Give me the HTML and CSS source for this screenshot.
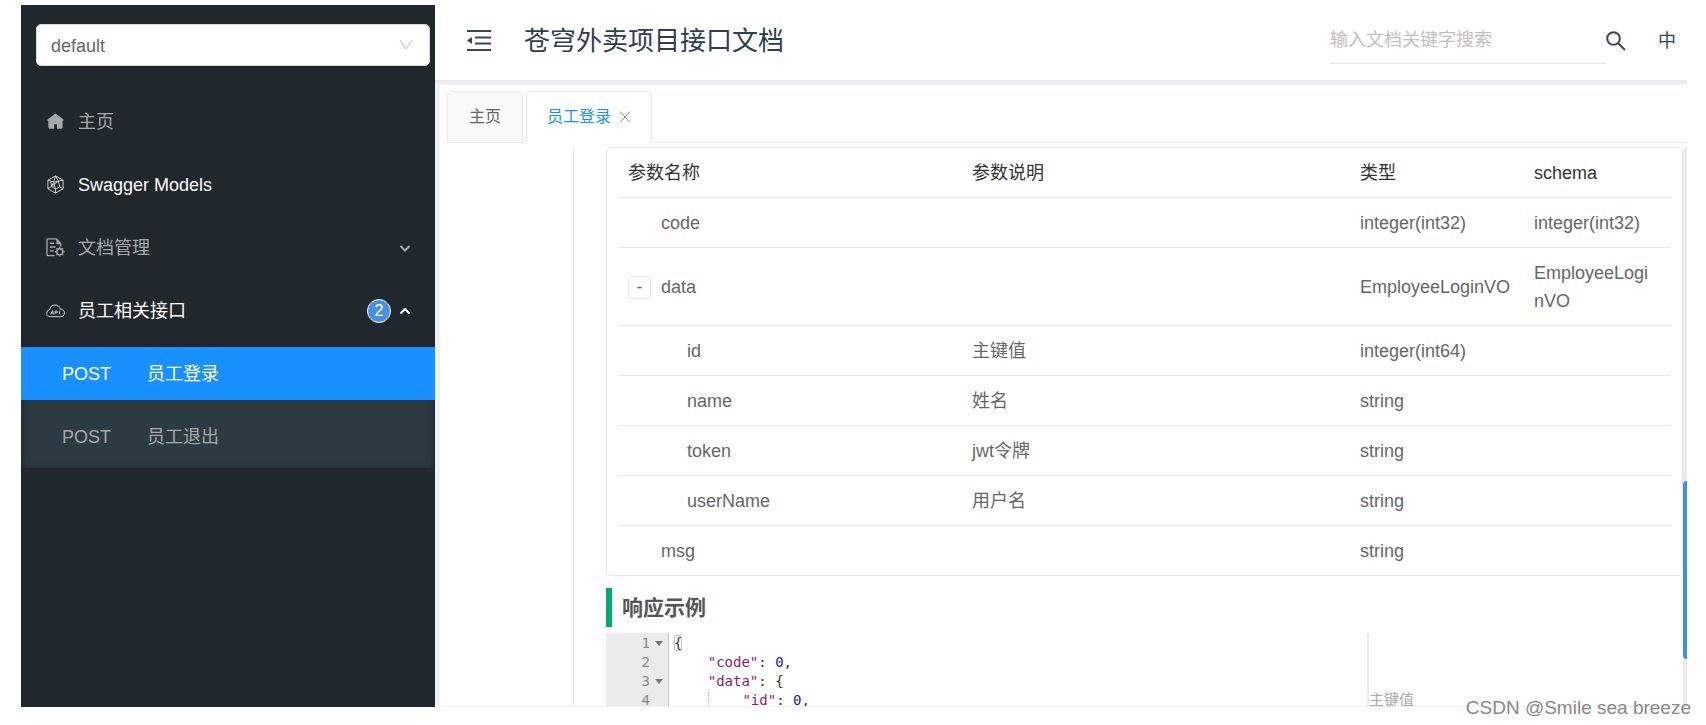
FILE: index.html
```html
<!DOCTYPE html>
<html lang="zh-CN">
<head>
<meta charset="utf-8">
<title>苍穹外卖项目接口文档</title>
<link rel="stylesheet" href="styles.css">
</head>
<body>
<div class="app">
  <aside class="sidebar">
    <div class="group">
      <select class="group-select" aria-label="分组"><option>default</option></select>
      <svg class="group-arrow" viewBox="0 0 14 12" aria-hidden="true"><path d="M1 1l6 9 6-9"/></svg>
    </div>
    <nav class="menu">
      <a class="item" href="#">
        <svg class="icon" viewBox="0 0 20 20" aria-hidden="true"><path class="solid" d="M10 1.500L1.500 8Q1 9.500 2.500 9.500V16Q2.500 17.500 4 17.500H8.500V13H11.500V17.500H16Q17.500 17.500 17.500 16V9.500Q19 9.500 18.500 8Z"/></svg>
        <span class="label">主页</span>
      </a>
      <a class="item bright" href="#">
        <svg class="icon" viewBox="0 0 20 20" aria-hidden="true"><path d="M10 1L18 5.500V14.500L10 19L2 14.500V5.500ZM2 5.500L8 7.500L10 1L13 6.500L18 5.500M8 7.500L13 6.500L14.500 12.500L10 15L6 12ZM2 14.500L6 12L5 7M14.500 12.500L18 14.500M10 15V19M8 7.500L10 15M13 6.500L6 12"/></svg>
        <span class="label">Swagger Models</span>
      </a>
      <a class="item" href="#">
        <svg class="icon heavy" viewBox="0 0 20 20" aria-hidden="true"><path d="M9 18.500H2Q1 18.500 1 17.500V2Q1 1 2 1H11L15.500 6V9M4 5.500H8.500M4 9.500H10M4 13.500H8"/><path class="solid" d="M11 0.500V6.500H16.500Z"/><circle cx="14.500" cy="14.500" r="3.200"/><path d="M14.500 9.500V11M14.500 18V19.500M9.500 14.500H11M18 14.500H19.500M11 11L12.200 12.200M16.800 16.800L18 18M18 11L16.800 12.200M12.200 16.800L11 18"/></svg>
        <span class="label">文档管理</span>
        <svg class="chevron" viewBox="0 0 12 12" aria-hidden="true"><path d="M1.500 4L6 8.500L10.500 4"/></svg>
      </a>
      <a class="item bright" href="#">
        <svg class="icon" viewBox="0 0 20 20" aria-hidden="true"><path d="M5 16.500Q0.700 16.500 0.700 12.700Q0.700 9.700 4 9Q4.500 4.200 9.500 4.200Q13.800 4.200 15 8.500Q19.300 9 19.300 12.700Q19.300 16.500 15 16.500Z"/><path d="M5 14L7 10L7.700 14M5.800 12.800H7.500M9.300 14L10 10.500H11.500Q12.500 11.500 11.500 12.500H10M14.500 10.300L14 14"/></svg>
        <span class="label">员工相关接口</span>
        <span class="badge">2</span>
        <svg class="chevron" viewBox="0 0 12 12" aria-hidden="true"><path d="M1.500 8.500L6 4L10.500 8.500"/></svg>
      </a>
      <div class="submenu">
        <a class="subitem active" href="#"><span class="method">POST</span><span>员工登录</span></a>
        <a class="subitem" href="#"><span class="method">POST</span><span>员工退出</span></a>
      </div>
    </nav>
  </aside>
  <main class="main">
    <header class="header">
      <button class="fold" aria-label="收起菜单"><svg viewBox="0 0 26 24" aria-hidden="true"><path d="M1 2H25M9 8.500H25M9 14.500H25M1 21H25"/><path class="solid" d="M1 11.500L6 8V15Z"/></svg></button>
      <h1 class="title">苍穹外卖项目接口文档</h1>
      <input class="search" type="text" aria-label="搜索" placeholder="输入文档关键字搜索">
      <button class="search-btn" aria-label="搜索"><svg viewBox="0 0 20 20" aria-hidden="true"><circle cx="7.500" cy="7.500" r="6.300"/><path d="M12 12L19 19"/></svg></button>
      <button class="lang">中</button>
    </header>
    <div class="body">
      <div class="tabs">
        <button class="tab">主页</button>
        <button class="tab current">员工登录<svg viewBox="0 0 12 12" aria-hidden="true"><path d="M1 0.500L11 11.500M11 0.500L1 11.500"/></svg></button>
      </div>
      <div class="pane">
        <div class="side"></div>
        <section class="doc">
          <div class="card">
            <table class="params">
              <colgroup><col class="c-name"><col><col class="c-type"><col class="c-schema"></colgroup>
              <thead><tr><th>参数名称</th><th>参数说明</th><th>类型</th><th>schema</th></tr></thead>
              <tbody>
                <tr><td class="l1">code</td><td></td><td>integer(int32)</td><td>integer(int32)</td></tr>
                <tr><td><div class="node"><button class="toggle" aria-label="收起">-</button>data</div></td><td></td><td>EmployeeLoginVO</td><td>EmployeeLoginVO</td></tr>
                <tr><td class="l2">id</td><td>主键值</td><td>integer(int64)</td><td></td></tr>
                <tr><td class="l2">name</td><td>姓名</td><td>string</td><td></td></tr>
                <tr><td class="l2">token</td><td>jwt令牌</td><td>string</td><td></td></tr>
                <tr><td class="l2">userName</td><td>用户名</td><td>string</td><td></td></tr>
                <tr><td class="l1">msg</td><td></td><td>string</td><td></td></tr>
              </tbody>
            </table>
          </div>
          <h2 class="section">响应示例</h2>
          <div class="editor">
            <div class="gutter">
              <div class="num fold-on">1</div><div class="num">2</div><div class="num fold-on">3</div><div class="num">4</div>
            </div>
            <div class="code">
              <div class="line"><span class="brace">{</span></div>
              <div class="line">    <span class="key">"code"</span>: <span class="n">0</span>,</div>
              <div class="line">    <span class="key">"data"</span>: {</div>
              <div class="line">    <span class="guide">    </span><span class="key">"id"</span>: <span class="n">0</span>,</div>
            </div>
            <div class="notes">主键值</div>
          </div>
        </section>
        <div class="track"><div class="thumb"></div></div>
      </div>
    </div>
  </main>
</div>
<div class="watermark">CSDN @Smile sea breeze</div>
</body>
</html>
```
FILE: styles.css
```css
* { box-sizing: border-box; }
body {
  margin: 0;
  background: #fff;
  color: #666;
  font: 18px/28px "Liberation Sans", "Noto Sans CJK SC", sans-serif;
}
button, input, select { font: inherit; color: inherit; background: none; border: 0; margin: 0; padding: 0; }
a { color: inherit; text-decoration: none; }
svg { fill: none; stroke: currentColor; flex: none; }
.solid { fill: currentColor; stroke: none; }

.app { display: flex; height: 100vh; padding: 5px 19px 18px 21px; }

.sidebar { width: 414px; flex: none; background: #20272d; color: #a6a9ab; }
.group { display: grid; margin: 19px 5px 29px 15px; }
.group-select, .group-arrow { grid-area: 1 / 1; }
.group-select {
  appearance: none;
  height: 42px;
  padding: 2px 14px 0;
  background: #fff;
  color: #666;
  border: 1px solid #d9d9d9;
  border-radius: 5px;
}
.group-arrow { width: 14px; height: 12px; justify-self: end; align-self: center; margin-right: 17px; color: #bfbfbf; }
.menu { display: flex; flex-direction: column; }
.item { display: flex; align-items: center; height: 53px; margin-bottom: 10px; padding: 0 24px 0 25px; }
.item.bright { color: #fff; }
.icon { width: 19px; height: 19px; margin-right: 13px; }
.bright .icon { color: #d5d8da; }
.heavy { stroke-width: 1.4; }
.label { flex: 1; }
.chevron { width: 12px; height: 12px; stroke-width: 2; }
.badge {
  width: 24px;
  height: 24px;
  margin-right: 8px;
  border: 1px solid #fff;
  border-radius: 50%;
  background: #4a90e2;
  font-size: 16px;
  line-height: 22px;
  text-align: center;
}
.submenu { background: #2c3a41; padding-bottom: 5px; box-shadow: inset 0 2px 8px rgba(0, 0, 0, 0.45); display: flex; flex-direction: column; gap: 10px; }
.subitem { display: flex; align-items: center; height: 53px; padding-left: 41px; }
.subitem.active { background: #1890ff; color: #fff; }
.method { width: 85px; }

.main { flex: 1; min-width: 0; display: flex; flex-direction: column; }
.header { display: flex; align-items: center; height: 75px; flex: none; padding: 0 11px 4px 31px; color: #34495e; }
.fold { width: 26px; height: 24px; }
.fold svg { display: block; width: 26px; height: 24px; stroke-width: 2; }
.title { flex: 1; margin: 0 0 0 32px; font-size: 26px; line-height: 40px; font-weight: 400; color: #2c3e50; }
.search { width: 276px; height: 46px; border-bottom: 1px solid #e3e3e3; outline: 0; }
.search::placeholder { color: #bfbfbf; opacity: 1; }
.search-btn { width: 20px; height: 20px; }
.search-btn svg { display: block; width: 20px; height: 20px; stroke-width: 2; }
.lang { margin-left: 32px; }

.body { flex: 1; min-height: 0; display: flex; flex-direction: column; border-left: 5px solid #f0f1f5; border-bottom: 1px solid #eeeff3; }
.body::before { content: ""; flex: none; height: 5px; margin: 0 0 6px -5px; background: linear-gradient(#e6e8ed, #f0f1f5); }
.tabs { display: flex; gap: 3px; flex: none; height: 52px; margin-left: 7px; box-shadow: inset 0 -1px #e8e8e8; }
.tab {
  display: flex;
  align-items: center;
  gap: 8px;
  padding: 0 21px;
  border: 1px solid #e8e8e8;
  border-radius: 5px 5px 0 0;
  background: #fafafa;
  font-size: 16px;
}
.tab.current { background: #fff; border-bottom-color: #fff; color: #1890ff; padding: 0 20px; }
.tab svg { width: 12px; height: 12px; color: #8c8c8c; }
.pane { flex: 1; min-height: 0; display: flex; margin-top: 4px; overflow: hidden; }
.side { width: 134px; flex: none; border-right: 1px solid #e8e8e8; }
.doc { flex: 1; min-width: 0; margin-left: 32px; }
.card { border: 1px solid #e8e8e8; border-radius: 5px; padding: 0 11px; }
.params { width: 100%; table-layout: fixed; border-collapse: collapse; }
.c-name { width: 344px; }
.c-type { width: 174px; }
.c-schema { width: 147px; }
.params th, .params td { padding: 11px 10px 10px; text-align: left; font-weight: 400; border-bottom: 1px solid #e8e8e8; overflow-wrap: anywhere; }
.params th { color: #333; }
.params td:last-child { padding-right: 20px; }
.params tr:last-child td { border-bottom: 0; }
.params .l1 { padding-left: 43px; }
.params .l2 { padding-left: 69px; }
.node { display: flex; align-items: center; gap: 10px; }
.toggle { width: 23px; height: 23px; border: 1px solid #e8e8e8; border-radius: 2px; line-height: 20px; }
.section { margin: 12px 0 6px; padding-left: 10px; border-left: 6px solid #00ab6d; font-size: 21px; line-height: 39px; color: #555; }
.editor { display: flex; font: 14px/19px "DejaVu Sans Mono", "Noto Sans CJK SC", monospace; }
.gutter { width: 63px; flex: none; padding: 1px 0; background: #ebebeb; border-right: 1px solid #c8c8c8; color: #8a8a8a; }
.num { display: flex; align-items: center; justify-content: flex-end; padding-right: 18px; }
.fold-on { padding-right: 5px; gap: 5px; }
.fold-on::after { content: ""; border: 4px solid transparent; border-top: 5px solid #777; border-bottom: 0; }
.code { flex: 1; padding: 1px 0 0 5px; color: #333; }
.line { height: 19px; white-space: pre; }
.brace { outline: 1px solid #c0c0c0; outline-offset: -1px; border-radius: 2px; }
.key { color: #8b1a6b; }
.n { color: #1a1aa6; }
.guide { border-left: 1px dotted #bfbfbf; }
.notes { width: 316px; flex: none; padding-top: 58px; border-left: 2px solid #e8e8e8; color: #aaa; font-size: 15px; }
.track { width: 4px; flex: none; padding-top: 334px; background: #ebebeb; border-radius: 4px 0 0 4px; }
.thumb { height: 178px; background: #4090e0; border-radius: 4px 0 0 4px; }

.watermark { position: absolute; right: 15px; bottom: 3px; font-size: 19px; color: #888; }
```
